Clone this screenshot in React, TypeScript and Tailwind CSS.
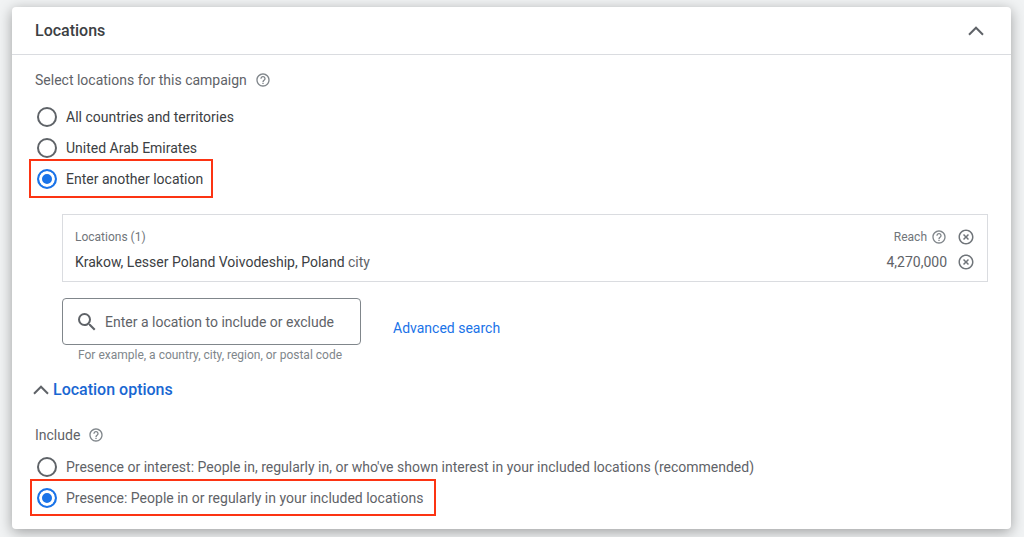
import { useState } from "react";
import { clsx } from "clsx";
import { MdHelpOutline, MdHighlightOff, MdSearch } from "react-icons/md";

const TARGETS = ["All countries and territories", "United Arab Emirates", "Enter another location"];

const INCLUDE_OPTIONS = [
  "Presence or interest: People in, regularly in, or who've shown interest in your included locations (recommended)",
  "Presence: People in or regularly in your included locations",
];

interface RadioRowProps {
  name: string;
  label: string;
  checked: boolean;
  highlighted?: boolean;
  className?: string;
  onSelect: () => void;
}

function RadioRow({ name, label, checked, highlighted, className, onSelect }: RadioRowProps) {
  return (
    <label
      className={clsx(
        "flex h-[31px] w-fit items-center gap-[9px] text-sm",
        highlighted && "outline-2 outline-[#fc3413]",
        className,
      )}
    >
      <input
        type="radio"
        name={name}
        checked={checked}
        onChange={onSelect}
        className="size-5 shrink-0 appearance-none rounded-full border-2 border-[#5f6368] checked:border-[#1a73e8] checked:bg-[#1a73e8] checked:shadow-[inset_0_0_0_3px_#fff]"
      />
      {label}
    </label>
  );
}

function Chevron() {
  return (
    <svg width="16" height="10" viewBox="0 0 16 10" fill="none" stroke="#5f6368" strokeWidth="2" aria-hidden="true">
      <path d="M1 8.7 8 1.7l7 7" />
    </svg>
  );
}

function HelpButton({ label }: { label: string }) {
  return (
    <button type="button" aria-label={label} className="text-[#80868b]">
      <MdHelpOutline size={16} />
    </button>
  );
}

function RemoveButton({ label }: { label: string }) {
  return (
    <button type="button" aria-label={label} className="text-[#70757a]">
      <MdHighlightOff size={18} />
    </button>
  );
}

export default function App() {
  const [target, setTarget] = useState(2);
  const [include, setInclude] = useState(1);

  return (
    <main className="min-h-screen bg-[#f1f3f4] pb-[7px] pl-3 pr-[13px] pt-[7px] font-[Roboto,sans-serif] text-[#5f6368]">
      <section className="rounded-sm bg-white pb-4 shadow-[0_3px_14px_rgba(0,0,0,0.35)]">
        <header className="flex h-12 items-center justify-between border-b border-[#dadce0] px-[23px]">
          <h1 className="text-base font-medium text-[#3c4043]">Locations</h1>
          <button type="button" aria-label="Collapse locations" className="mr-1">
            <Chevron />
          </button>
        </header>

        <div className="px-[23px] pt-[15px]">
          <fieldset>
            <div className="mb-[11px] flex h-5 items-center gap-2 text-sm">
              <legend>Select locations for this campaign</legend>
              <HelpButton label="Help with locations" />
            </div>
            <div className="-ml-0.5 text-[#3c4043]">
              {TARGETS.map((label, i) => (
                <RadioRow
                  key={label}
                  name="target"
                  label={label}
                  checked={target === i}
                  highlighted={i === 2}
                  className="pl-1 pr-1.5 outline-offset-2"
                  onSelect={() => setTarget(i)}
                />
              ))}
            </div>
          </fieldset>

          <div className="ml-[27px] mt-5">
            <table className="w-full border-separate border-spacing-0 border border-[#dadce0] px-3 pb-1.5 pt-2.5">
              <thead>
                <tr className="h-6 text-xs text-[#70757a]">
                  <th scope="col" className="text-left font-normal">Locations (1)</th>
                  <th scope="col" className="font-normal">
                    <div className="flex items-center justify-end gap-1">
                      Reach
                      <HelpButton label="Help with reach" />
                    </div>
                  </th>
                  <td className="w-7">
                    <div className="flex justify-end">
                      <RemoveButton label="Remove all locations" />
                    </div>
                  </td>
                </tr>
              </thead>
              <tbody>
                <tr className="h-[26px] text-sm">
                  <td>
                    <span className="text-[#3c4043]">Krakow, Lesser Poland Voivodeship, Poland</span> city
                  </td>
                  <td className="text-right">4,270,000</td>
                  <td>
                    <div className="flex justify-end">
                      <RemoveButton label="Remove Krakow" />
                    </div>
                  </td>
                </tr>
              </tbody>
            </table>

            <div className="mt-4 flex items-start gap-8">
              <div className="w-[299px]">
                <div className="flex h-[47px] items-center gap-1.5 rounded border border-[#80868b] px-3">
                  <MdSearch size={24} className="shrink-0" />
                  <input
                    type="text"
                    aria-label="Location"
                    aria-describedby="location-hint"
                    placeholder="Enter a location to include or exclude"
                    className="min-w-0 flex-1 text-sm outline-none placeholder:text-[#5f6368]"
                  />
                </div>
                <p id="location-hint" className="ml-4 mt-0.5 text-xs text-[#80868b]">
                  For example, a country, city, region, or postal code
                </p>
              </div>
              <a href="#advanced" className="mt-5 text-sm text-[#1a73e8]">
                Advanced search
              </a>
            </div>
          </div>

          <button type="button" className="-ml-0.5 mt-[15px] flex h-6 items-center gap-1 font-medium text-[#1967d2]">
            <Chevron />
            Location options
          </button>

          <fieldset className="mt-[23px]">
            <div className="mb-1.5 flex h-5 items-center gap-2 text-sm">
              <legend>Include</legend>
              <HelpButton label="Help with include" />
            </div>
            <div className="-ml-0.5">
              {INCLUDE_OPTIONS.map((label, i) => (
                <RadioRow
                  key={label}
                  name="include"
                  label={label}
                  checked={include === i}
                  highlighted={i === 1}
                  className="pl-1 pr-2.5 outline-offset-1"
                  onSelect={() => setInclude(i)}
                />
              ))}
            </div>
          </fieldset>
        </div>
      </section>
    </main>
  );
}
